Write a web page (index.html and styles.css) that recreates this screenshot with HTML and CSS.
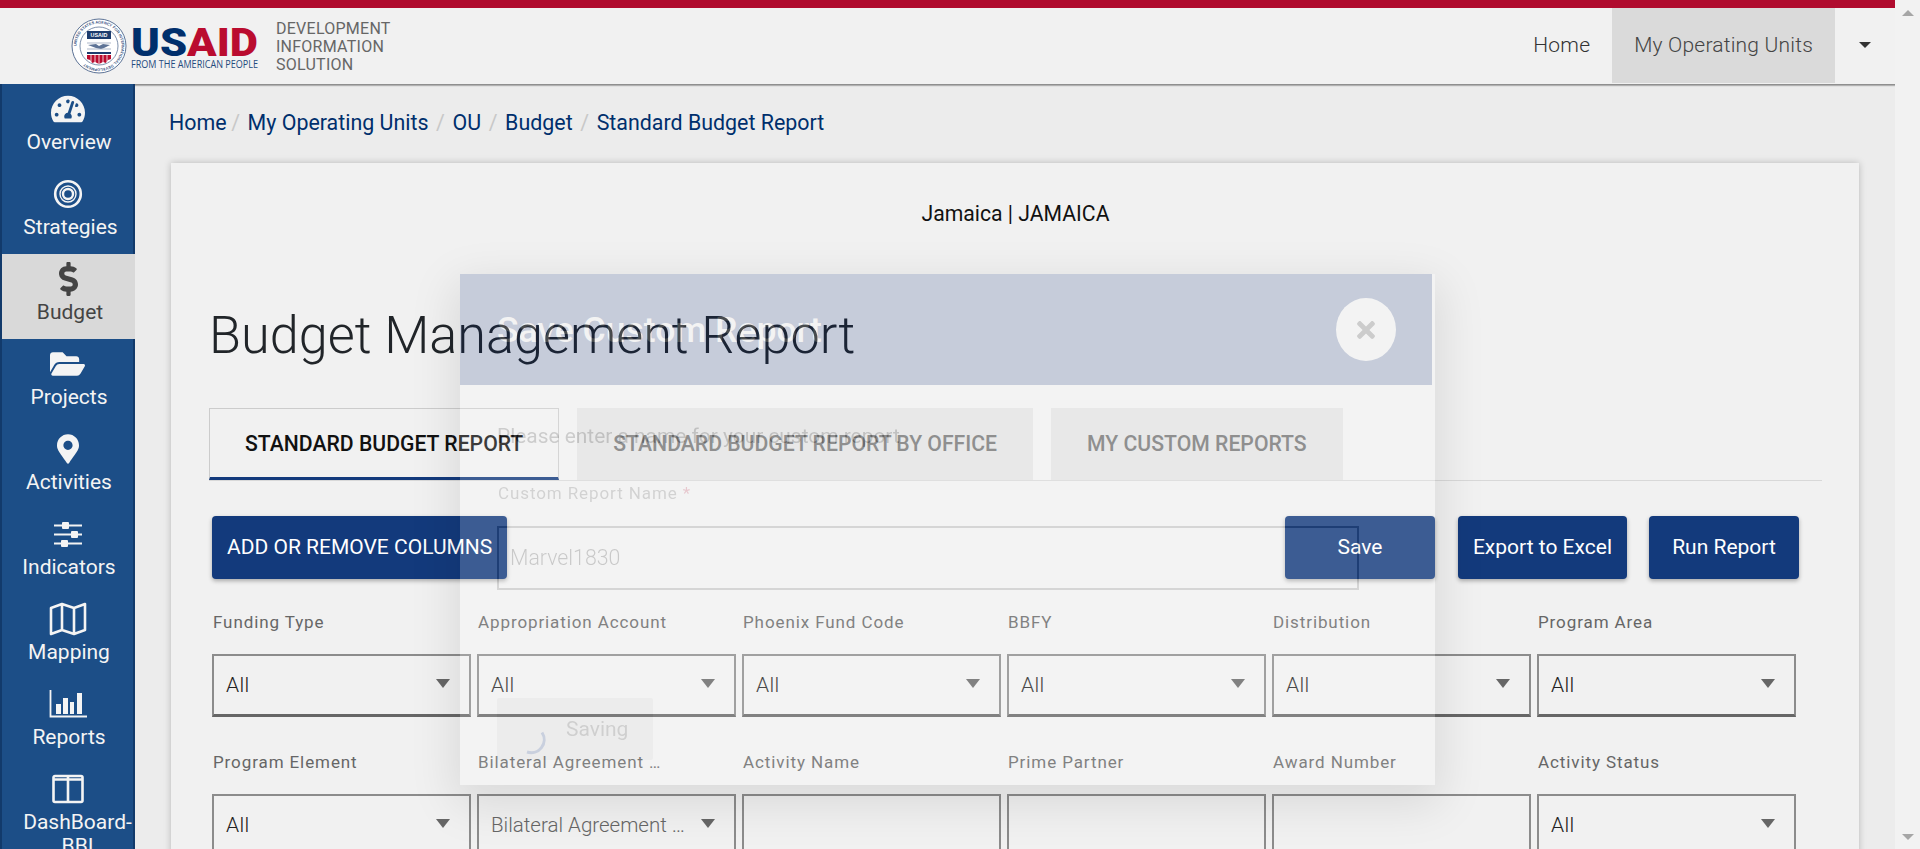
FILE: index.html
```html
<!DOCTYPE html>
<html lang="en">
<head>
<meta charset="utf-8">
<title>Budget Management Report</title>
<link rel="stylesheet" href="styles.css">
</head>
<body>
<div class="page">
  <div class="viewport">
    <div class="redbar"></div>
    <header class="topnav">
      <div class="brand">
        <svg class="seal" viewBox="0 0 56 56" width="56" height="56">
          <circle cx="28" cy="28" r="27" fill="#fff" stroke="#5d7396" stroke-width="1"/>
          <defs><path id="ring" d="M28 28 m-22.5 0 a22.5 22.5 0 1 1 45 0 a22.5 22.5 0 1 1 -45 0"/></defs>
          <text class="sealtext"><textPath href="#ring">UNITED STATES AGENCY FOR INTERNATIONAL DEVELOPMENT</textPath></text>
          <circle cx="28" cy="28" r="19" fill="#fff" stroke="#5d7396" stroke-width=".8"/>
          <rect x="16" y="13" width="24" height="8" fill="#1d3c6e"/>
          <text class="sealmark" x="28" y="19.2" text-anchor="middle">USAID</text>
          <path d="M17 27l8-1 3 2 4-2 7 1-6 3-3 1-5-1z" fill="#5d7396"/>
          <path d="M16 25h24M16 31h24" stroke="#8a9ab3" stroke-width=".7"/>
          <rect x="16" y="34" width="24" height="2" fill="#1d3c6e"/>
          <path d="M16 37h24v4l-3 1-2 3-3-1-4 2-4-2-3 1-2-3-3-1z" fill="#ba0c2f"/>
          <path d="M20 37v8M24 37v8M28 37v9M32 37v8M36 37v8" stroke="#fff" stroke-width=".8"/>
        </svg>
        <svg class="wordmark" viewBox="0 0 128 42" width="128" height="42">
          <text class="wm-big" x="0" y="28" textLength="127" lengthAdjust="spacingAndGlyphs"><tspan fill="#002f6c">US</tspan><tspan fill="#ba0c2f">AID</tspan></text>
          <text class="wm-small" x="0" y="40" textLength="127" lengthAdjust="spacingAndGlyphs">FROM THE AMERICAN PEOPLE</text>
        </svg>
        <div class="brandname">DEVELOPMENT<br>INFORMATION<br>SOLUTION</div>
      </div>
      <nav class="navlinks">
        <a class="navlink">Home</a>
        <a class="navlink navlink-active">My Operating Units</a>
        <span class="navcaret"></span>
      </nav>
    </header>
    <div class="below">
      <aside class="sidebar">
        <a class="sideitem">
          <svg class="ico" viewBox="0 0 576 512" width="34" height="30"><path fill="currentColor" d="M288 32C128.94 32 0 160.94 0 320c0 52.8 14.25 102.26 39.06 144.8 5.61 9.62 16.3 15.2 27.44 15.2h443c11.14 0 21.83-5.58 27.44-15.2C561.75 422.26 576 372.8 576 320c0-159.06-128.94-288-288-288zm0 64c14.71 0 26.58 10.13 30.32 23.65-1.11 2.26-2.64 4.23-3.45 6.67l-9.22 27.67c-5.13 3.49-10.97 6.01-17.64 6.01-17.67 0-32-14.33-32-32S270.33 96 288 96zM96 384c-17.67 0-32-14.33-32-32s14.33-32 32-32 32 14.33 32 32-14.33 32-32 32zm48-160c-17.67 0-32-14.33-32-32s14.33-32 32-32 32 14.33 32 32-14.33 32-32 32zm246.77-72.41l-61.33 184C343.13 347.33 352 364.54 352 384c0 11.72-3.38 22.55-8.88 32H232.88c-5.5-9.45-8.88-20.28-8.88-32 0-33.94 26.5-61.43 59.9-63.59l61.34-184.01c4.17-12.56 17.73-19.45 30.36-15.17 12.57 4.19 19.35 17.79 15.17 30.36zm14.66 57.2l15.52-46.55c3.47-1.29 7.13-2.23 11.05-2.23 17.67 0 32 14.33 32 32s-14.33 32-32 32c-11.38-.01-20.89-6.28-26.57-15.22zM480 384c-17.67 0-32-14.33-32-32s14.33-32 32-32 32 14.33 32 32-14.33 32-32 32z"/></svg>
          <span>Overview</span>
        </a>
        <a class="sideitem sideitem-shift">
          <svg class="ico" viewBox="0 0 30 30" width="30" height="30"><g fill="none" stroke="currentColor"><circle cx="15" cy="15" r="12.8" stroke-width="2.6"/><circle cx="15" cy="15" r="8" stroke-width="1.4"/><circle cx="15" cy="15" r="5" stroke-width="2.4"/></g></svg>
          <span>Strategies</span>
        </a>
        <a class="sideitem sideitem-active">
          <svg class="ico" viewBox="0 0 288 512" width="19" height="34"><path fill="currentColor" d="M209.2 233.4l-108-31.6C88.7 198.2 80 186.5 80 173.5c0-16.3 13.2-29.5 29.5-29.5h66.3c12.2 0 24.2 3.7 34.2 10.5 6.1 4.1 14.3 3.1 19.5-2l34.8-34c7.1-6.9 6.1-18.4-1.8-24.5C238 74.8 207.4 64.1 176 64V16c0-8.8-7.2-16-16-16h-32c-8.8 0-16 7.2-16 16v48h-2.5C45.8 64-5.4 118.7.5 183.6c4.2 46.1 39.4 83.6 83.8 96.6l102.5 30c12.5 3.7 21.2 15.3 21.2 28.3 0 16.3-13.2 29.5-29.5 29.5h-66.3C100 368 88 364.3 78 357.5c-6.1-4.1-14.3-3.1-19.5 2l-34.8 34c-7.1 6.9-6.1 18.4 1.8 24.5 24.5 19.2 55.1 29.9 86.5 30v48c0 8.8 7.2 16 16 16h32c8.8 0 16-7.2 16-16v-48.2c46.6-.9 90.3-28.6 105.7-72.7 21.5-61.6-14.6-124.8-72.5-141.7z"/></svg>
          <span>Budget</span>
        </a>
        <a class="sideitem">
          <svg class="ico" viewBox="0 0 576 512" width="35" height="31"><path fill="currentColor" d="M572.694 292.093L500.27 416.248A63.997 63.997 0 0 1 444.989 448H45.025c-18.523 0-30.064-20.093-20.731-36.093l72.424-124.155A64 64 0 0 1 152 256h399.964c18.523 0 30.064 20.093 20.73 36.093zM152 224h328v-48c0-26.51-21.49-48-48-48H272l-64-64H48C21.49 64 0 85.49 0 112v278.046l69.077-118.418C86.214 242.25 117.989 224 152 224z"/></svg>
          <span>Projects</span>
        </a>
        <a class="sideitem">
          <svg class="ico" viewBox="0 0 384 512" width="22" height="29"><path fill="currentColor" d="M172.268 501.67C26.97 291.031 0 268.413 0 192 0 85.961 85.961 0 192 0s192 85.961 192 192c0 76.413-26.97 99.031-172.268 309.67-9.535 13.774-29.93 13.773-39.464 0zM192 272c44.183 0 80-35.817 80-80s-35.817-80-80-80-80 35.817-80 80 35.817 80 80 80z"/></svg>
          <span>Activities</span>
        </a>
        <a class="sideitem">
          <svg class="ico" viewBox="0 0 30 26" width="30" height="26"><g fill="currentColor"><rect x="1" y="3.5" width="28" height="2"/><rect x="1" y="12.5" width="28" height="2"/><rect x="1" y="21.5" width="28" height="2"/><rect x="9" y="1" width="7" height="7" rx="1"/><rect x="18" y="10" width="7" height="7" rx="1"/><rect x="8" y="19" width="7" height="7" rx="1"/></g></svg>
          <span>Indicators</span>
        </a>
        <a class="sideitem">
          <svg class="ico" viewBox="0 0 38 34" width="38" height="34"><path fill="none" stroke="currentColor" stroke-width="2.6" stroke-linejoin="round" d="M2 6l11-4 12 4 11-4v26l-11 4-12-4-11 4zM13 2v26M25 6v26"/></svg>
          <span>Mapping</span>
        </a>
        <a class="sideitem">
          <svg class="ico" viewBox="0 0 38 28" width="38" height="28"><path fill="none" stroke="currentColor" stroke-width="1.8" d="M1.5 0v26.5H38"/><g fill="currentColor"><rect x="7" y="14" width="5" height="10"/><rect x="14" y="8" width="5" height="16"/><rect x="21" y="12" width="4" height="12"/><rect x="28" y="3" width="5" height="21"/></g></svg>
          <span>Reports</span>
        </a>
        <a class="sideitem sideitem-wide">
          <svg class="ico" viewBox="0 0 32 29" width="32" height="29"><path fill="none" stroke="currentColor" stroke-width="2.6" d="M3 1.5h26a1.5 1.5 0 0 1 1.5 1.5v23a1.5 1.5 0 0 1-1.5 1.5H3A1.5 1.5 0 0 1 1.5 26V3A1.5 1.5 0 0 1 3 1.5zM16 1.5v26M1.5 5h29" /></svg>
          <span>DashBoard-BBI</span>
        </a>
      </aside>
      <main class="content">
        <ol class="crumbs">
          <li><a>Home</a></li>
          <li><a>My Operating Units</a></li>
          <li><a>OU</a></li>
          <li><a>Budget</a></li>
          <li><a>Standard Budget Report</a></li>
        </ol>
        <section class="card">
          <div class="ou">Jamaica | JAMAICA</div>
          <h1 class="title">Budget Management Report</h1>
          <div class="tabs">
            <a class="tab tab-active">STANDARD BUDGET REPORT</a>
            <a class="tab">STANDARD BUDGET REPORT BY OFFICE</a>
            <a class="tab">MY CUSTOM REPORTS</a>
          </div>
          <div class="actions">
            <button class="btn">ADD OR REMOVE COLUMNS</button>
            <div class="actions-right">
              <button class="btn btn-wide btn-save">Save</button>
              <button class="btn">Export to Excel</button>
              <button class="btn btn-wide">Run Report</button>
            </div>
          </div>
          <div class="filters">
            <div class="field"><label>Funding Type</label><div class="select"><span>All</span><i class="arrow"></i></div></div>
            <div class="field"><label>Appropriation Account</label><div class="select"><span>All</span><i class="arrow"></i></div></div>
            <div class="field"><label>Phoenix Fund Code</label><div class="select"><span>All</span><i class="arrow"></i></div></div>
            <div class="field"><label>BBFY</label><div class="select"><span>All</span><i class="arrow"></i></div></div>
            <div class="field"><label>Distribution</label><div class="select"><span>All</span><i class="arrow"></i></div></div>
            <div class="field"><label>Program Area</label><div class="select"><span>All</span><i class="arrow"></i></div></div>
            <div class="field"><label>Program Element</label><div class="select"><span>All</span><i class="arrow"></i></div></div>
            <div class="field"><label>Bilateral Agreement …</label><div class="select select-empty"><span>Bilateral Agreement …</span><i class="arrow"></i></div></div>
            <div class="field"><label>Activity Name</label><div class="select"></div></div>
            <div class="field"><label>Prime Partner</label><div class="select"></div></div>
            <div class="field"><label>Award Number</label><div class="select"></div></div>
            <div class="field"><label>Activity Status</label><div class="select"><span>All</span><i class="arrow"></i></div></div>
          </div>
        </section>
      </main>
    </div>
    <div class="modal">
      <div class="modal-head">
        <h2>Save Custom Report</h2>
        <span class="modal-close"><svg viewBox="0 0 352 512" width="18" height="26"><path fill="currentColor" d="M242.72 256l100.07-100.07c12.28-12.28 12.28-32.19 0-44.48l-22.24-22.24c-12.28-12.28-32.19-12.28-44.48 0L176 189.28 75.93 89.21c-12.28-12.28-32.19-12.28-44.48 0L9.21 111.45c-12.28 12.28-12.28 32.19 0 44.48L109.28 256 9.21 356.07c-12.28 12.28-12.28 32.19 0 44.48l22.24 22.24c12.28 12.28 32.2 12.28 44.48 0L176 322.72l100.07 100.07c12.28 12.28 32.2 12.28 44.48 0l22.24-22.24c12.28-12.28 12.28-32.19 0-44.48L242.72 256z"/></svg></span>
      </div>
      <div class="modal-body">
        <p class="modal-intro">Please enter a name for your custom report</p>
        <div class="modal-label">Custom Report Name <em>*</em></div>
        <div class="modal-input">Marvel1830</div>
        <div class="saving">
          <svg class="spinner" viewBox="0 0 28 28" width="28" height="28"><path fill="none" stroke="#12388a" stroke-width="3" d="M19 2.5A13 13 0 0 1 4 22"/></svg>
          <span>Saving</span>
        </div>
      </div>
    </div>
  </div>
  <div class="scrollbar">
    <i class="sb-up"></i>
    <i class="sb-down"></i>
  </div>
</div>
</body>
</html>
```
FILE: styles.css
```css
* { box-sizing: border-box; }
html, body { margin: 0; padding: 0; height: 100%; overflow: hidden; }
body { font-family: Roboto, "Liberation Sans", sans-serif; color: #212529; background: #ececec; }
h1, h2, p, ol { margin: 0; padding: 0; }
a { text-decoration: none; }

.page { display: flex; width: 1920px; height: 849px; overflow: hidden; }
.viewport { position: relative; width: 1895px; height: 849px; display: flex; flex-direction: column; overflow: hidden; }
.scrollbar { width: 25px; background: #f2f2f2; display: flex; flex-direction: column; justify-content: space-between; align-items: center; padding: 10px 0 9px; }
.sb-up { width: 0; height: 0; border: 6px solid transparent; border-top: 0; border-bottom: 6px solid #a6a6a6; }
.sb-down { width: 0; height: 0; border: 6px solid transparent; border-bottom: 0; border-top: 6px solid #a6a6a6; }

.redbar { height: 8px; background: #b00b2e; flex: none; }
.topnav { height: 76px; flex: none; background: #f1f1f1; box-shadow: 0 1px 0 #8f8f8f, 0 2px 1px rgba(0,0,0,.25); display: flex; justify-content: space-between; align-items: flex-start; }
.brand { display: flex; align-items: center; height: 76px; padding-left: 71px; }
.seal { flex: none; }
.sealtext { font: 700 3.9px "Liberation Sans", sans-serif; fill: #3c5683; }
.sealmark { font: 700 5.4px "Liberation Sans", sans-serif; fill: #fff; }
.wordmark { margin-left: 4px; margin-top: 5px; flex: none; overflow: visible; }
.wm-big { font: 900 38px Roboto, sans-serif; }
.wm-small { font: 400 10.5px "Open Sans", sans-serif; fill: #244a7d; }
.brandname { margin-left: 17px; margin-top: 1px; font-size: 16px; line-height: 18px; color: #666; letter-spacing: .25px; }
.navlinks { display: flex; align-items: stretch; height: 75px; }
.navlink { display: flex; align-items: center; padding: 0 22px; font-size: 21px; font-weight: 300; color: #333; letter-spacing: .2px; padding-bottom: 2px; }
.navlink-active { background: #dadada; color: #444; padding: 0 22px 2px 22px; }
.navcaret { width: 60px; display: flex; align-items: center; justify-content: center; padding-bottom: 2px; }
.navcaret::after { content: ""; border: 6px solid transparent; border-bottom: 0; border-top: 6px solid #333; }

.below { flex: 1; display: flex; min-height: 0; }
.sidebar { width: 135px; flex: none; background: #1c4e87; border-left: 2px solid #123a6b; border-right: 2px solid #123a6b; display: flex; flex-direction: column; }
.sideitem { height: 85px; flex: none; display: flex; flex-direction: column; align-items: center; color: #f4f4f4; font-size: 21px; line-height: 24px; text-align: center; padding-top: 8px; }
.sideitem .ico { height: 34px; flex: none; margin-bottom: 4px; }
.sideitem span { display: block; width: 100%; padding: 0 0 0 3px; }
.sideitem-shift span { padding: 0 0 0 6px; }
.sideitem-wide span { padding: 0 0 0 20px; }
.sideitem-active { background: #d9d9d9; color: #444; margin-right: -2px; position: relative; }

.content { flex: 1; min-width: 0; padding: 24px 36px 0; }
.crumbs { list-style: none; display: flex; height: 30px; align-items: center; font-size: 21.4px; line-height: 30px; margin-left: -2px; }
.crumbs a { color: #002f6c; }
.crumbs li + li::before { content: "/"; color: #c8c8c8; padding: 0 7.6px; }
.crumbs li:first-child { margin-right: -3px; }
.card { margin-top: 25px; background: #f1f1f1; box-shadow: 0 0 7px rgba(0,0,0,.22); padding: 39px 37px 40px 38px; height: 900px; }
.ou { text-align: center; font-size: 21.2px; line-height: 24px; color: #111; }
.title { margin-top: 79px; font-size: 52.2px; line-height: 62px; font-weight: 300; color: #212529; }
.tabs { margin-top: 41px; display: flex; gap: 18px; height: 73px; border-bottom: 1px solid #d8d8d8; }
.tab { height: 72px; display: flex; align-items: center; padding: 0 36px 2px; font-size: 21.2px; font-weight: 500; background: #e3e4e4; color: #777; }
.tab-active { background: transparent; color: #111; border: 1px solid #ccc; border-bottom: 3px solid #133a7c; padding: 0 35px; }
.actions { margin-top: 35px; padding: 0 23px 0 3px; display: flex; justify-content: space-between; }
.actions-right { display: flex; gap: 22px; }
.btn { height: 63px; border: 0; border-radius: 4px; padding: 0 15px 1px; background: #133a7c; color: #fff; font: 400 21px Roboto, sans-serif; box-shadow: 0 2px 4px rgba(0,0,0,.3); }
.btn-wide { min-width: 150px; }
.btn-save { margin-right: 1px; }
.filters { margin: 33px 0 0 3px; display: grid; grid-template-columns: repeat(6, 259px); column-gap: 6px; row-gap: 35px; }
.field label { display: block; height: 20px; line-height: 20px; margin: 0 0 22px 1px; font-size: 17px; letter-spacing: .9px; color: #666; white-space: nowrap; }
.select { height: 63px; border: 2px solid #8c8c8c; border-bottom: 3px solid #666; display: flex; align-items: center; justify-content: space-between; padding: 0 19px 0 12px; font-size: 21px; font-weight: 300; color: #222; letter-spacing: .3px; }
.select-empty { color: #666; white-space: nowrap; letter-spacing: 0; font-size: 20.5px; }
.arrow { flex: none; width: 0; height: 0; border: 7px solid transparent; border-bottom: 0; border-top: 9px solid #666; margin-top: -3px; }

.modal { position: absolute; left: 460px; top: 274px; width: 975px; height: 511px; background: #fff; opacity: .18; box-shadow: 0 14px 44px 6px rgba(0,0,0,.55); padding-right: 3px; }
.modal-head { height: 111px; background: #002372; display: flex; align-items: center; justify-content: space-between; padding: 0 36px 0 37px; }
.modal-head h2 { font-size: 35.5px; font-weight: 500; color: #fff; }
.modal-close { width: 60px; height: 63px; border-radius: 50%; background: #fff; color: #222; display: flex; align-items: center; justify-content: center; }
.modal-body { padding: 0 37px; }
.modal-intro { margin-top: 38px; font-size: 20.9px; line-height: 26px; color: #222; }
.modal-label { margin-top: 34px; font-size: 17px; line-height: 20px; letter-spacing: .9px; color: #444; padding-left: 1px; }
.modal-label em { font-style: normal; color: #ba0c2f; }
.modal-input { margin-top: 23px; height: 64px; width: 862px; border: 2px solid #555; font-size: 21.3px; font-weight: 300; color: #111; display: flex; align-items: center; padding: 0 0 2px 11px; }
.saving { margin-top: 108px; width: 156px; height: 62px; background: #d8d8d8; border-radius: 2px; position: relative; font-size: 21px; color: #333; }
.saving span { position: absolute; left: 69px; top: 19px; line-height: 24px; }
.spinner { position: absolute; left: 26px; top: 32px; }
```
